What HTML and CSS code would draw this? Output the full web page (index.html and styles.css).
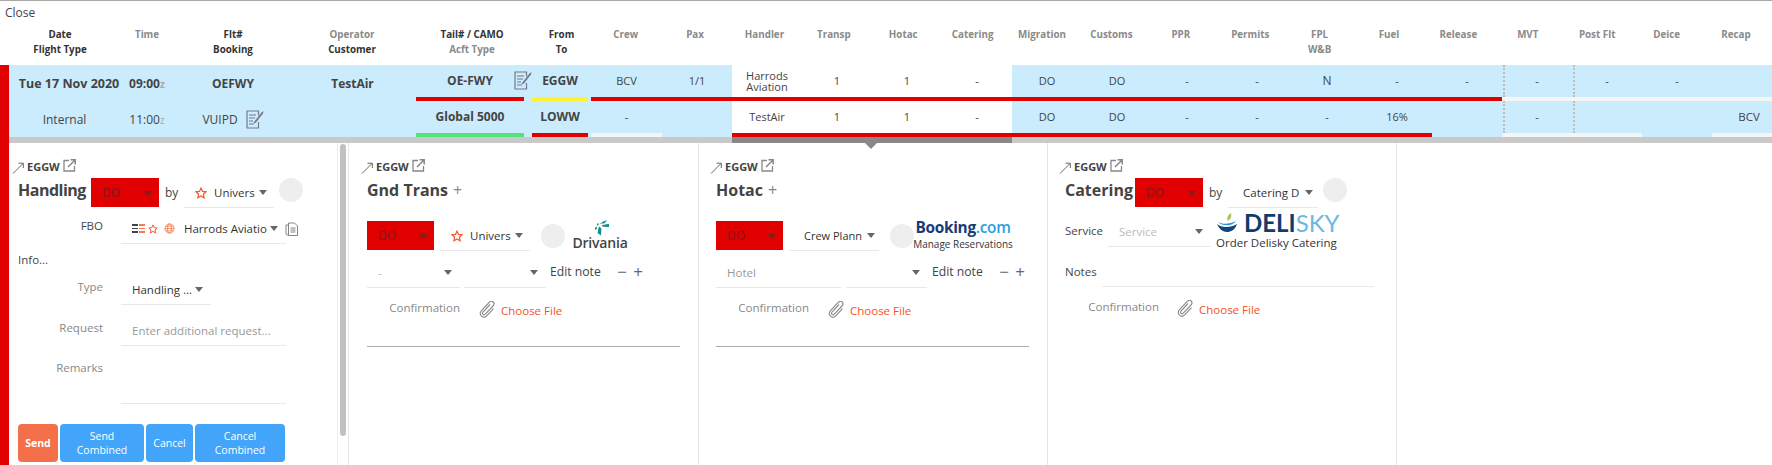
FILE: index.html
```html
<!DOCTYPE html>
<html lang="en">
<head>
<meta charset="utf-8">
<title>Flight detail</title>
<link rel="stylesheet" href="styles.css">
</head>
<body>
<svg class="defs" xmlns="http://www.w3.org/2000/svg">
  <symbol id="i-arrow" viewBox="0 0 12 12"><path d="M1 11.5 11 1.5M6.5 1.2h4.8V6" fill="none" stroke="#666" stroke-width="1"/></symbol>
  <symbol id="i-ext" viewBox="0 0 13 13"><path d="M6 1.5H1v10.5h10.5V7" fill="none" stroke="#888" stroke-width="1.3"/><path d="M5 8 11.5 1.5M7.5 .8h4.7v4.7" fill="none" stroke="#888" stroke-width="1.5"/></symbol>
  <symbol id="i-note" viewBox="0 0 18 19"><path d="M12.5 5.5V1H1v17h11.500v-6" fill="none" stroke="#778" stroke-width="1.200"/><path d="M3 5h7M3 8h6M3 11h4M3 14h5" stroke="#778" stroke-width="1.200"/><path d="M8 12 15.500 2.500 17.500 1 17 3.500 10 12.500 7.500 13.500Z" fill="#778"/></symbol>
  <symbol id="i-star" viewBox="0 0 12 12"><path d="M6 1.100 7.500 4.400 11 4.800 8.400 7.200 9.100 10.700 6 8.900 2.900 10.700 3.600 7.200 1 4.800 4.500 4.400Z" fill="none" stroke="#f4572e" stroke-width="1.200"/></symbol>
  <symbol id="i-globe" viewBox="0 0 12 12"><g fill="none" stroke="#f47a55" stroke-width=".9"><circle cx="6" cy="6" r="5"/><ellipse cx="6" cy="6" rx="2.200" ry="5"/><path d="M1 6h10M1.800 3.500h8.400M1.800 8.500h8.400"/></g></symbol>
  <symbol id="i-doc" viewBox="0 0 13 14"><g fill="none" stroke="#777" stroke-width=".9"><path d="M3.500 1h6l3 3v9.500h-9z"/><path d="M3.500 3H1v9l2.500 1.500"/><path d="M5.500 6h5M5.500 8h5M5.500 10h5"/></g></symbol>
  <symbol id="i-clip" viewBox="0 0 17 18"><path d="M11 3.500 4 11c-1.500 1.700.7 3.800 2.300 2.200l7.700-8.200c2.700-3-1.200-6.500-3.800-3.700L2.500 9.700c-3.500 4 1.700 9 5.500 5l6.500-7" fill="none" stroke="#888" stroke-width="1.100"/></symbol>
</svg>

<div class="topline"></div>
<div class="closebar">Close</div>

<div class="heads">
  <div class="hd"><b>Date</b><b>Flight Type</b></div>
  <div class="hd"><span>Time</span></div>
  <div class="hd"><b>Flt#</b><b>Booking</b></div>
  <div class="hd hd-oper"><span>Operator</span><b>Customer</b></div>
  <div class="hd hd-tail"><b>Tail# / CAMO</b><span>Acft Type</span></div>
  <div class="hd hd-from"><b>From</b><b>To</b></div>
  <div class="hd"><span>Crew</span></div>
  <div class="hd"><span>Pax</span></div>
  <div class="hd"><span>Handler</span></div>
  <div class="hd"><span>Transp</span></div>
  <div class="hd"><span>Hotac</span></div>
  <div class="hd"><span>Catering</span></div>
  <div class="hd"><span>Migration</span></div>
  <div class="hd"><span>Customs</span></div>
  <div class="hd"><span>PPR</span></div>
  <div class="hd"><span>Permits</span></div>
  <div class="hd"><span>FPL</span><span>W&amp;B</span></div>
  <div class="hd"><span>Fuel</span></div>
  <div class="hd"><span>Release</span></div>
  <div class="hd"><span>MVT</span></div>
  <div class="hd"><span>Post Flt</span></div>
  <div class="hd"><span>Deice</span></div>
  <div class="hd"><span>Recap</span></div>
</div>

<div class="detail">
  <div class="strip"></div>
  <div class="content">
    <div class="row">
      <div class="c lead strong cell-date">Tue 17 Nov 2020</div>
      <div class="c lead strong">09:00<small>z</small></div>
      <div class="c lead strong">OEFWY</div>
      <div class="c lead strong cell-oper">TestAir</div>
      <div class="c tail b-red strong"><span class="tail-text">OE-FWY</span><svg class="note note-tail"><use href="#i-note"/></svg></div>
      <div class="c from b-yellow strong">EGGW</div>
      <div class="c b-red">BCV</div>
      <div class="c b-red">1/1</div>
      <div class="c b-red wh two">Harrods<br>Aviation</div>
      <div class="c b-red wh">1</div>
      <div class="c b-red wh">1</div>
      <div class="c b-red wh">-</div>
      <div class="c b-red">DO</div>
      <div class="c b-red">DO</div>
      <div class="c b-red">-</div>
      <div class="c b-red">-</div>
      <div class="c b-red big">N</div>
      <div class="c b-red">-</div>
      <div class="c b-red">-</div>
      <div class="c b-white dot">-</div>
      <div class="c b-white dot">-</div>
      <div class="c b-white">-</div>
      <div class="c b-white"></div>
    </div>
    <div class="row">
      <div class="c lead reg cell-type">Internal</div>
      <div class="c lead reg">11:00<small>z</small></div>
      <div class="c lead reg">VUIPD<svg class="note note-book"><use href="#i-note"/></svg></div>
      <div class="c"></div>
      <div class="c tail b-green strong">Global 5000</div>
      <div class="c from b-red strong">LOWW</div>
      <div class="c b-white">-</div>
      <div class="c"></div>
      <div class="c b-red wh">TestAir</div>
      <div class="c b-red wh">1</div>
      <div class="c b-red wh">1</div>
      <div class="c b-red wh">-</div>
      <div class="c b-red">DO</div>
      <div class="c b-red">DO</div>
      <div class="c b-red">-</div>
      <div class="c b-red">-</div>
      <div class="c b-red">-</div>
      <div class="c b-red">16%</div>
      <div class="c"></div>
      <div class="c b-white dot">-</div>
      <div class="c b-white dot"></div>
      <div class="c"></div>
      <div class="c b-white recap">BCV</div>
    </div>
    <div class="sep">
      <div class="sep-active"></div>
    </div>

    <div class="panels">
      <section class="panel panel-first">
        <div class="loc"><svg class="ic-arrow"><use href="#i-arrow"/></svg><b>EGGW</b><svg class="ic-ext"><use href="#i-ext"/></svg></div>
        <div class="line">
          <h2 class="title w-handling">Handling</h2>
          <div class="status">DO<i class="caret"></i></div>
          <span class="by">by</span>
          <div class="sel sel-vendor"><svg class="ic-star"><use href="#i-star"/></svg><span class="val">Univers</span><i class="caret"></i></div>
          <span class="dotc dotc-top"></span>
        </div>
        <div class="frow fbo">
          <label class="flabel dark">FBO</label>
          <div class="sel sel-wide">
            <span class="bars"><i></i><i></i><i></i></span>
            <svg class="ic-star star-s"><use href="#i-star"/></svg>
            <svg class="ic-globe"><use href="#i-globe"/></svg>
            <span class="val val-fbo">Harrods Aviatio</span><i class="caret"></i>
          </div>
          <svg class="ic-doc"><use href="#i-doc"/></svg>
        </div>
        <div class="info">Info...</div>
        <div class="frow ftype">
          <label class="flabel">Type</label>
          <div class="sel sel-type"><span class="val">Handling ...</span><i class="caret"></i></div>
        </div>
        <div class="frow freq">
          <label class="flabel">Request</label>
          <div class="sel sel-wide"><span class="ph">Enter additional request...</span></div>
        </div>
        <div class="frow frem">
          <label class="flabel">Remarks</label>
          <div class="sel sel-wide sel-area"></div>
        </div>
        <div class="btns">
          <button class="btn btn-send">Send</button>
          <button class="btn btn-b1">Send<br>Combined</button>
          <button class="btn btn-b2">Cancel</button>
          <button class="btn btn-b3">Cancel<br>Combined</button>
        </div>
        <div class="scrollthumb"></div>
      </section>

      <section class="panel panel-second">
        <div class="loc"><svg class="ic-arrow"><use href="#i-arrow"/></svg><b>EGGW</b><svg class="ic-ext"><use href="#i-ext"/></svg></div>
        <div class="line"><h2 class="title">Gnd Trans</h2><span class="plus-t">+</span></div>
        <div class="line line-2">
          <div class="status st2">DO<i class="caret"></i></div>
          <div class="sel sel-vendor sv2"><svg class="ic-star"><use href="#i-star"/></svg><span class="val">Univers</span><i class="caret"></i></div>
          <span class="dotc dotc-mid"></span>
          <div class="driv">
            <svg class="driv-mark" viewBox="0 0 18 17"><g fill="#13908c"><path d="M8 4 12 1.500 16 0 13.500 3.500Z"/><path d="M10 5.500 18 4 18 7.500 12 7.200Z"/><path d="M7.500 7 10 9 9.500 16.500 6 14 6.500 9.500Z"/><path d="M5 5 6.200 3 7.200 4.500 6 6Z"/><path d="M3 8.500 5 6.800 5.500 8.500 3.500 11Z"/></g></svg>
            <span class="driv-name">Drivania</span>
          </div>
        </div>
        <div class="line line-3">
          <div class="sel s-dash"><span class="ph ph-l">-</span><i class="caret"></i></div>
          <div class="sel s-b"><i class="caret"></i></div>
          <span class="edit">Edit note</span>
          <span class="pm pm-m">−</span><span class="pm">+</span>
        </div>
        <div class="conf">
          <span class="conf-label">Confirmation</span>
          <svg class="ic-clip"><use href="#i-clip"/></svg>
          <span class="choose">Choose File</span>
        </div>
        <hr class="rule">
      </section>

      <section class="panel panel-rest">
        <div class="loc"><svg class="ic-arrow"><use href="#i-arrow"/></svg><b>EGGW</b><svg class="ic-ext"><use href="#i-ext"/></svg></div>
        <div class="line"><h2 class="title">Hotac</h2><span class="plus-t">+</span></div>
        <div class="line line-2">
          <div class="status st2">DO<i class="caret"></i></div>
          <div class="sel sel-vendor sv2 sv-crew"><span class="val val-crew">Crew Plann</span><i class="caret"></i></div>
          <span class="dotc dotc-mid"></span>
          <div class="booking">
            <div class="bk-name">Booking<span>.com</span></div>
            <div class="bk-sub">Manage Reservations</div>
          </div>
        </div>
        <div class="line line-3">
          <div class="sel s-hotel"><span class="ph ph-hotel">Hotel</span></div>
          <div class="sel s-b2"><i class="caret"></i></div>
          <span class="edit edit-h">Edit note</span>
          <span class="pm pm-m">−</span><span class="pm">+</span>
        </div>
        <div class="conf">
          <span class="conf-label">Confirmation</span>
          <svg class="ic-clip"><use href="#i-clip"/></svg>
          <span class="choose">Choose File</span>
        </div>
        <hr class="rule">
      </section>

      <section class="panel panel-rest">
        <div class="loc"><svg class="ic-arrow"><use href="#i-arrow"/></svg><b>EGGW</b><svg class="ic-ext"><use href="#i-ext"/></svg></div>
        <div class="line">
          <h2 class="title w-catering">Catering</h2>
          <div class="status">DO<i class="caret"></i></div>
          <span class="by">by</span>
          <div class="sel sel-vendor sv-cat"><span class="val val-cat">Catering D</span><i class="caret"></i></div>
          <span class="dotc dotc-top"></span>
        </div>
        <div class="line svc">
          <label class="lbl-svc">Service</label>
          <div class="sel s-svc"><span class="ph ph-svc">Service</span><i class="caret"></i></div>
          <div class="deli">
            <div class="deli-logo">
              <svg class="deli-mark" viewBox="0 0 22 20"><path d="M1 11c4 4 14 4 20 0-2 6-6 8-10 8S3 16 1 11Z" fill="#13467a"/><path d="M2 9c5 3 12 2 18-1-3 5-13 6-18 1Z" fill="#2f8fd6"/><path d="M12 8c-2-3 0-6 3-8 1 3 0 6-3 8Z" fill="#a7c957"/></svg>
              <span class="deli-name">DELI<span>SKY</span></span>
            </div>
            <div class="deli-sub">Order Delisky Catering</div>
          </div>
        </div>
        <div class="line notes">
          <label class="lbl-notes">Notes</label>
          <div class="sel s-notes"></div>
        </div>
        <div class="conf conf-cat">
          <span class="conf-label">Confirmation</span>
          <svg class="ic-clip"><use href="#i-clip"/></svg>
          <span class="choose">Choose File</span>
        </div>
      </section>
      <section class="panel panel-empty"></section>
    </div>
  </div>
</div>
</body>
</html>
```
FILE: styles.css
```css
* { box-sizing: border-box; }
html, body { margin: 0; padding: 0; height: 465px; overflow: hidden; background: #fff; }
body { font-family: "Open Sans", "Liberation Sans", sans-serif; color: #333; font-size: 11px; }
.defs { display: none; }

.topline { height: 1px; background: #a8a8a8; }
.closebar { height: 23px; padding-left: 5px; font-size: 12px; line-height: 24px; color: #444; }

.heads {
  height: 41px;
  padding-left: 9px;
  display: grid;
  grid-template-columns: 102px 72px 100px 133px 116px 59px repeat(17, 69.4px);
}
.hd { display: flex; flex-direction: column; align-items: center; font-size: 9.800px; line-height: 15px; padding-top: 3px; white-space: nowrap; font-weight: 700; }
.hd b { color: #333; font-weight: 700; }
.hd span { color: #8a8a8a; }
.hd-oper { padding-left: 5px; }
.hd-tail { padding-right: 4px; }

.detail { display: flex; height: 400px; overflow: hidden; }
.strip { width: 9px; flex: none; background: #e00000; }
.content { flex: 1; min-width: 0; }

.row {
  display: grid;
  grid-template-columns: 102px 72px 100px 133px 116px 59px 71px 70px repeat(14, 70px) 60px;
  height: 36px;
  background: #cbecfd;
}
.c {
  height: 36px;
  display: flex;
  align-items: center;
  justify-content: center;
  text-align: center;
  font-size: 11px;
  line-height: 11.500px;
  color: #444;
  border-bottom: 4px solid transparent;
  white-space: nowrap;
  background-clip: padding-box;
}
.lead { padding-top: 5px; }
.strong { font-weight: 700; font-size: 12px; color: #444; }
.reg { font-size: 12px; color: #444; }
.cell-date { padding-left: 18px; font-size: 12.500px; }
.cell-type { padding-left: 9px; }
.cell-oper { padding-left: 6px; }
.c small { font-size: 10px; color: #aaa; margin-top: 2px; }
.big { font-size: 12px; }
.tail { margin-right: 8px; position: relative; }
.from { margin-right: 3px; }
.b-red { border-bottom-color: #e00000; }
.b-yellow { border-bottom-color: #fff22e; }
.b-green { border-bottom-color: #55e27a; }
.b-white { border-bottom-color: #f5f5f5; }
.wh { background-color: #fff; }
.dot { position: relative; }
.dot::before {
  content: "";
  position: absolute;
  left: 1px;
  top: 0;
  bottom: 0;
  border-left: 2px dotted #bdbdbd;
}
.recap { padding-left: 14px; font-size: 11.500px; }

.note { width: 18px; height: 19px; }
.note-tail { position: absolute; left: 98px; top: 6px; }
.note-book { margin-left: 8px; }

.sep { height: 6px; background: #c9c9c9; padding-left: 723px; }
.sep-active { width: 280px; height: 6px; background: #888; position: relative; }
.sep-active::after {
  content: "";
  position: absolute;
  left: 133px;
  top: 6px;
  border: 6px solid transparent;
  border-top: 6px solid #888;
  border-bottom: 0;
}

.panels { display: flex; height: 322px; }
.panel {
  width: 349px;
  flex: none;
  padding: 16px 0 0 17px;
  border-right: 1px solid #e6e6e6;
  position: relative;
}
.panel-first { width: 340px; padding-left: 9px; }
.panel-first::after { content: ""; position: absolute; left: 328px; top: 0; bottom: 0; border-left: 1px solid #eee; }
.panel-second { width: 350px; padding-left: 18px; }
.panel-empty { flex: 1; border-right: 0; }

.loc { display: flex; align-items: center; height: 16px; margin-left: -6px; margin-bottom: 3px; font-size: 11px; color: #444; }
.loc b { font-weight: 700; margin-left: 3px; line-height: 16px; }
.ic-arrow { width: 12px; height: 12px; margin-top: 2px; }
.ic-ext { width: 13px; height: 13px; margin-left: 3px; margin-top: -4px; }

.line { display: flex; align-items: flex-start; height: 29px; }
.title { margin: 0; font-size: 16px; font-weight: 700; line-height: 24px; color: #444; white-space: nowrap; }
.w-handling { width: 73px; letter-spacing: -.5px; }
.w-catering { width: 70px; }
.plus-t { font-size: 16px; color: #888; line-height: 24px; margin-left: 5px; }

.status {
  width: 68px;
  height: 29px;
  background: #e00000;
  color: #7d1a1a;
  font-size: 12px;
  padding-left: 11px;
  line-height: 29px;
  position: relative;
  flex: none;
}
.status .caret { position: absolute; right: 7px; top: 13px; border-top-color: #7a2020; }
.caret { display: block; width: 0; height: 0; border: 4.500px solid transparent; border-top: 5px solid #666; border-bottom: 0; flex: none; }
.by { font-size: 12px; color: #444; margin-left: 6px; width: 19px; line-height: 30px; flex: none; }

.sel { display: flex; align-items: center; border-bottom: 1px solid #e8e8e8; height: 30px; white-space: nowrap; font-size: 11.500px; color: #333; flex: none; }
.sel-vendor { width: 90px; height: 30px; padding-left: 11px; }
.ic-star { width: 12px; height: 12px; flex: none; margin-right: 7px; }
.val { display: block; }
.sel-vendor .caret { margin-left: 4px; }
.dotc { width: 24px; height: 24px; border-radius: 50%; background: #eee; flex: none; }
.dotc-top { margin-left: 5px; }

.frow { display: flex; align-items: flex-start; }
.flabel { width: 85px; text-align: right; font-size: 11.500px; color: #888; flex: none; line-height: 24px; white-space: nowrap; }
.flabel.dark { color: #444; }
.sel-wide { width: 165px; margin-left: 18px; padding-left: 11px; }
.sel-type { width: 90px; margin-left: 18px; padding-left: 11px; }
.sel-type .caret { margin-left: 3px; }
.fbo { margin-top: 7px; height: 30px; }
.bars { display: flex; flex-direction: column; gap: 2px; width: 13px; margin-right: 3px; flex: none; }
.bars i { display: block; height: 1.500px; background: linear-gradient(90deg, #444 0 45%, transparent 45% 55%, #f47a55 55%); }
.star-s { width: 10px; height: 10px; margin: 0 6px 0 0; }
.ic-globe { width: 11px; height: 11px; margin: 0 9px 0 0; flex: none; }
.val-fbo { width: 84px; }
.sel-wide .caret { margin-left: 2px; }
.ic-doc { width: 13px; height: 14px; margin: 8px 0 0 -1px; flex: none; }
.info { margin-top: 7px; height: 18px; line-height: 18px; font-size: 11.500px; color: #444; }
.ftype { margin-top: 6px; height: 30px; }
.freq { margin-top: 11px; height: 30px; }
.frem { margin-top: 14px; height: 44px; }
.sel-area { height: 44px; }
.frem .flabel { line-height: 16px; }
.ph { color: #999; font-size: 11.500px; }
.btns { display: flex; gap: 2px; margin-top: 20px; height: 38px; }
.btn {
  height: 38px;
  border: 0;
  padding: 0;
  border-radius: 4px;
  background: #42a5f9;
  color: #fff;
  font-family: inherit;
  font-size: 10.500px;
  line-height: 14px;
}
.btn-send { width: 40px; background: #f4704a; font-weight: 700; }
.btn-b1 { width: 84px; }
.btn-b2 { width: 47px; }
.btn-b3 { width: 90px; }
.scrollthumb { position: absolute; left: 331px; top: 1px; width: 6px; height: 292px; background: #c1c1c1; border-radius: 3px; }

.line-2 { margin-top: 14px; height: 30px; }
.st2 { width: 67px; }
.sv2 { margin-left: 6px; }
.dotc-mid { margin: 3px 0 0 11px; }
.driv { display: flex; flex-direction: column; align-items: center; margin: -1px 0 0 7px; width: 56px; }
.driv-mark { width: 17px; height: 16px; }
.driv-name { font-size: 14px; font-weight: 600; color: #444; line-height: 14px; letter-spacing: -.2px; }
.line-3 { margin-top: 7px; height: 30px; }
.s-dash { width: 93px; padding-left: 11px; justify-content: space-between; padding-right: 8px; }
.ph-l { color: #bbb; }
.s-b { width: 82px; margin-left: 4px; justify-content: flex-end; padding-right: 8px; }
.s-hotel { width: 125px; padding-left: 11px; }
.s-b2 { width: 81px; margin-left: 5px; justify-content: flex-end; padding-right: 7px; }
.edit { font-size: 12.200px; color: #444; margin-left: 4px; line-height: 28px; width: 62px; white-space: nowrap; flex: none; }
.edit-h { margin-left: 5px; }
.pm { font-size: 17px; line-height: 27px; color: #666; width: 16px; text-align: center; flex: none; }
.pm-m { margin-left: 2px; }
.conf { display: flex; align-items: flex-start; margin-top: 10px; height: 27px; }
.conf-label { width: 93px; text-align: right; font-size: 11.500px; color: #888; line-height: 20px; flex: none; }
.ic-clip { width: 17px; height: 18px; margin: 3px 0 0 19px; flex: none; }
.choose { font-size: 11.500px; color: #f4511e; margin: 3px 0 0 5px; line-height: 20px; }
.rule { margin: 21px 0 0; border: 0; height: 1px; width: 313px; background: #aaa; }

.booking { margin: -2px 0 0 -1px; width: 100px; text-align: center; }
.bk-name { font-size: 15.400px; font-weight: 700; color: #173a78; line-height: 18px; letter-spacing: -.3px; }
.bk-name span { color: #2c9fdd; font-weight: 600; }
.bk-sub { font-size: 10px; color: #333; line-height: 14px; white-space: nowrap; }
.sv-crew { padding-left: 15px; }
.val-crew { width: 59px; font-size: 11px; }

.sv-cat { padding-left: 15px; }
.val-cat { width: 58px; }
.svc { margin-top: 7px; height: 40px; }
.lbl-svc { width: 43px; font-size: 11.500px; color: #444; line-height: 30px; flex: none; margin-top: 2px; }
.s-svc { width: 103px; padding-left: 11px; margin-top: 3px; justify-content: space-between; padding-right: 8px; }
.ph-svc { color: #bbb; }
.deli { margin: -3px 0 0 5px; width: 125px; }
.deli-logo { display: flex; align-items: center; height: 24px; }
.deli-mark { width: 22px; height: 20px; flex: none; }
.deli-name { font-family: "Lato", "Open Sans", sans-serif; font-size: 24px; line-height: 24px; color: #0f3d6b; font-weight: 700; margin-left: 6px; }
.deli-name span { color: #6db7e6; font-weight: 400; }
.deli-sub { font-size: 11.500px; color: #333; line-height: 16px; white-space: nowrap; }
.notes { margin-top: 3px; height: 30px; }
.lbl-notes { width: 37px; font-size: 11.500px; color: #444; line-height: 30px; flex: none; }
.s-notes { width: 272px; }
.conf-cat { margin-top: 10px; }
.conf-cat .conf-label { width: 94px; }
.conf-cat .ic-clip { margin-left: 18px; }
```
